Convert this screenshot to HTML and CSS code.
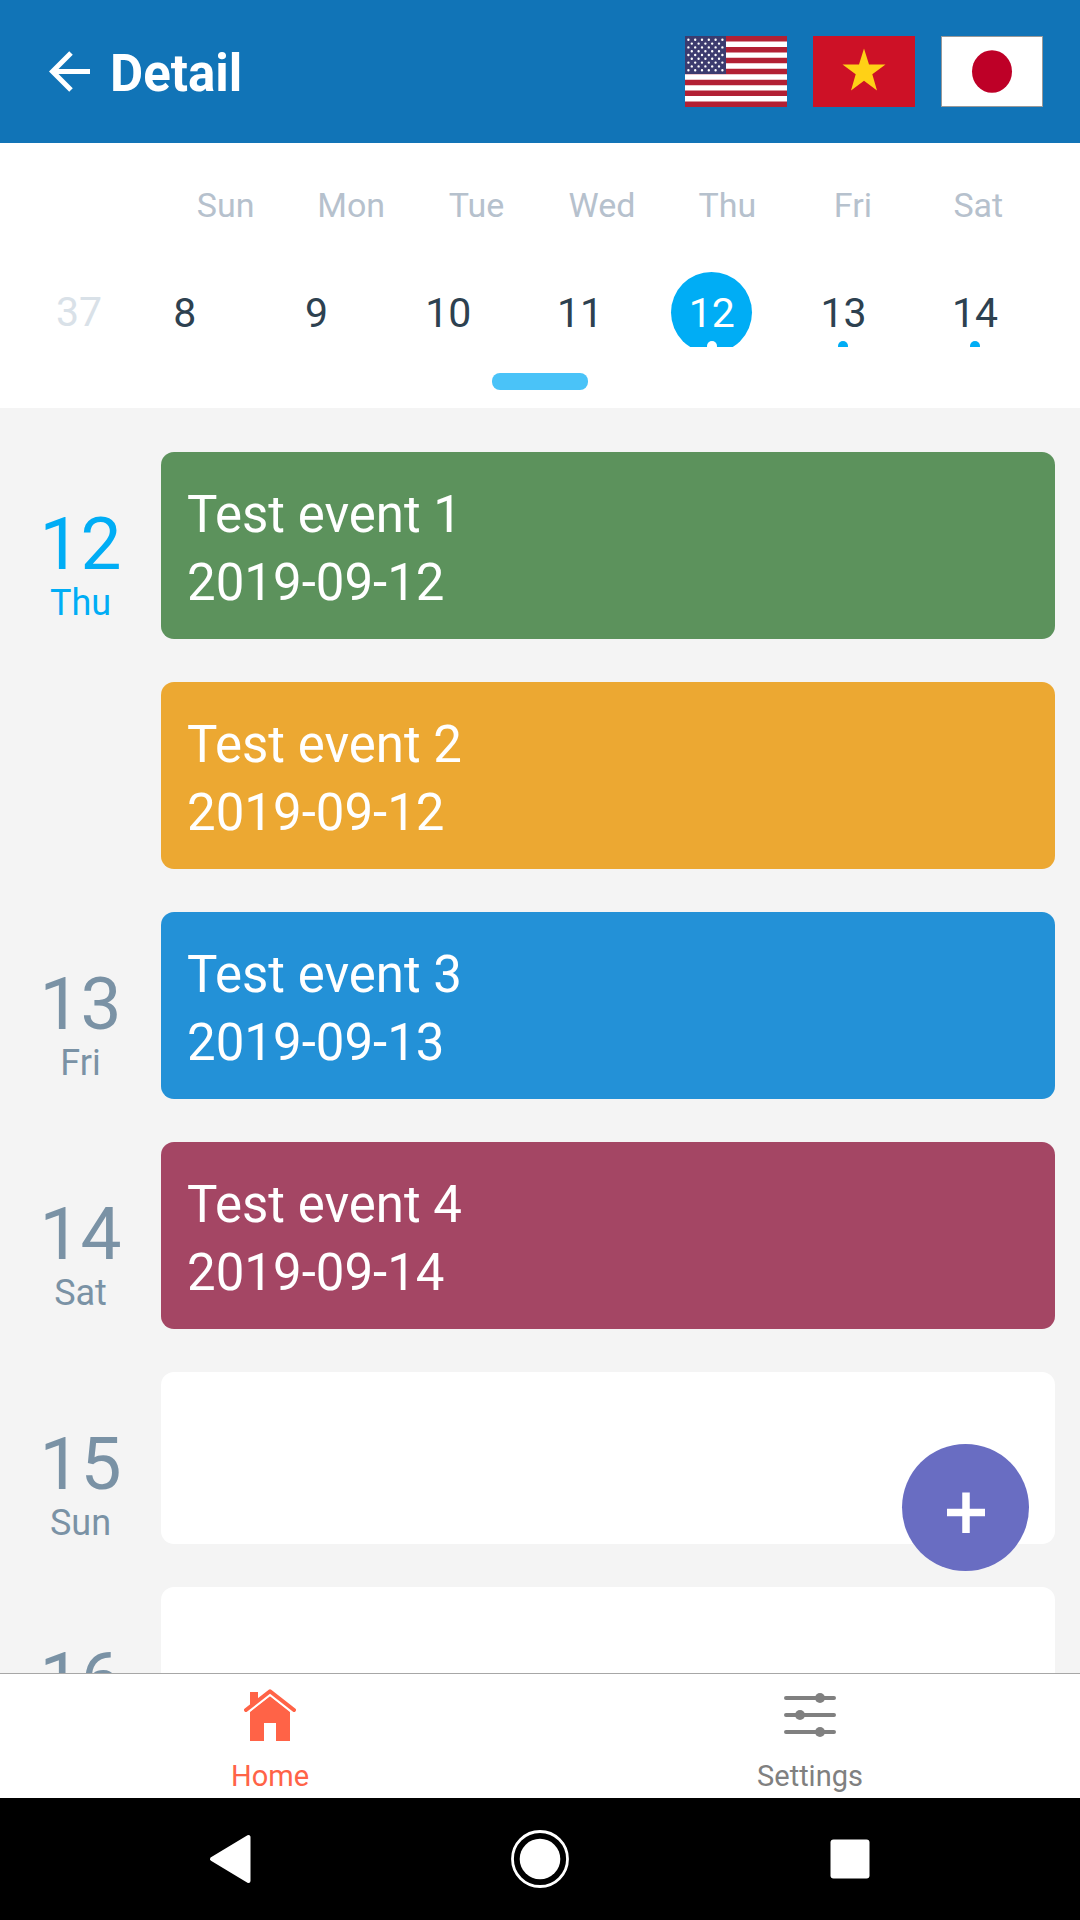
FILE: index.html
```html
<!DOCTYPE html>
<html lang="en">
<head>
<meta charset="utf-8">
<meta name="viewport" content="width=device-width, initial-scale=1">
<title>Detail</title>
<link rel="stylesheet" href="styles.css">
</head>
<body>
<div class="app">
  <header class="header">
    <a class="back" href="#" aria-label="Back">
      <svg class="back-icon" viewBox="0 0 41 41" aria-hidden="true"><path d="M22 2 3.500 20.500 22 39M3.500 20.500H41" fill="none" stroke="#fff" stroke-width="5"/></svg>
    </a>
    <h1 class="title">Detail</h1>
    <div class="languages">
      <button class="flag" type="button" aria-label="English">
        <svg viewBox="0 0 102 71" aria-hidden="true">
          <rect width="102" height="71" fill="#fff"/>
          <path d="M0 2.730H102M0 13.650H102M0 24.580H102M0 35.500H102M0 46.420H102M0 57.350H102M0 68.270H102" stroke="#b22034" stroke-width="5.460"/>
          <rect width="41" height="38" fill="#3c3b6e"/>
          <path d="M3.400 3.800h35M3.400 11.400h35M3.400 19h35M3.400 26.600h35M3.400 34.200h35M6.800 7.600h28M6.800 15.200h28M6.800 22.800h28M6.800 30.400h28" stroke="#fff" stroke-width="2.400" stroke-linecap="round" stroke-dasharray="0 6.800"/>
        </svg>
      </button>
      <button class="flag" type="button" aria-label="Tiếng Việt">
        <svg viewBox="0 0 102 71" aria-hidden="true">
          <rect width="102" height="71" fill="#cd1126"/>
          <path d="M51 12.500 56 28.500H72.500L59.300 38.300 64 54.500 51 44.800 38 54.500 42.700 38.300 29.500 28.500H46Z" fill="#ffd116"/>
        </svg>
      </button>
      <button class="flag" type="button" aria-label="日本語">
        <svg viewBox="0 0 102 71" aria-hidden="true">
          <rect x=".5" y=".5" width="101" height="70" fill="#fff" stroke="#999"/>
          <ellipse cx="51" cy="35.500" rx="20" ry="21.300" fill="#be0027"/>
        </svg>
      </button>
    </div>
  </header>

  <section class="calendar" aria-label="Week 37">
    <div class="weekdays">
      <span>Sun</span><span>Mon</span><span>Tue</span><span>Wed</span><span>Thu</span><span>Fri</span><span>Sat</span>
    </div>
    <div class="dates">
      <span class="week-number">37</span>
      <button class="date" type="button">8</button>
      <button class="date" type="button">9</button>
      <button class="date" type="button">10</button>
      <button class="date" type="button">11</button>
      <button class="date marked selected" type="button" aria-current="date">12</button>
      <button class="date marked" type="button">13</button>
      <button class="date marked" type="button">14</button>
    </div>
    <button class="knob" type="button" aria-label="Expand calendar"></button>
  </section>

  <main class="agenda">
    <div class="rows">
      <div class="row">
        <div class="day today"><span class="day-number">12</span><span class="day-name">Thu</span></div>
        <article class="event green"><p>Test event 1</p><p>2019-09-12</p></article>
      </div>
      <div class="row">
        <div class="day"></div>
        <article class="event orange"><p>Test event 2</p><p>2019-09-12</p></article>
      </div>
      <div class="row">
        <div class="day"><span class="day-number">13</span><span class="day-name">Fri</span></div>
        <article class="event blue"><p>Test event 3</p><p>2019-09-13</p></article>
      </div>
      <div class="row">
        <div class="day"><span class="day-number">14</span><span class="day-name">Sat</span></div>
        <article class="event plum"><p>Test event 4</p><p>2019-09-14</p></article>
      </div>
      <div class="row">
        <div class="day"><span class="day-number">15</span><span class="day-name">Sun</span></div>
        <div class="event empty"></div>
      </div>
      <div class="row">
        <div class="day"><span class="day-number">16</span></div>
        <div class="event empty"></div>
      </div>
    </div>
    <button class="add" type="button" aria-label="Add event">
      <svg viewBox="0 0 127 127" aria-hidden="true"><path d="M45 68.500H83M64 48.500V89" stroke="#fff" stroke-width="7.500"/></svg>
    </button>
  </main>

  <nav class="tabs">
    <a class="tab active" href="#" aria-current="page">
      <svg class="tab-icon" viewBox="0 0 52 52" aria-hidden="true">
        <path d="M6 3h8v7l-8 6.500zM26 7 46 22.500V52H32V34H20V52H6V22.500z" fill="currentColor"/>
        <path d="M2 21 26 2.200 50 21" fill="none" stroke="#fff" stroke-width="8"/>
        <path d="M6 3h8v7l-8 6.500z" fill="currentColor"/>
        <path d="M2 21 26 2.200 50 21" fill="none" stroke="currentColor" stroke-width="4" stroke-linecap="round" stroke-linejoin="round"/>
      </svg>
      Home
    </a>
    <a class="tab" href="#">
      <svg class="tab-icon" viewBox="0 0 52 52" aria-hidden="true">
        <path d="M2 9H50M2 26H50M2 43H50" stroke="currentColor" stroke-width="4" stroke-linecap="round"/>
        <g fill="currentColor"><circle cx="36" cy="9" r="5"/><circle cx="16" cy="26" r="5"/><circle cx="36" cy="43" r="5"/></g>
      </svg>
      Settings
    </a>
  </nav>

  <div class="system-bar">
    <button class="system-button" type="button" aria-label="Back">
      <svg viewBox="0 0 60 60" aria-hidden="true"><path d="M48.500 8v44L12 30z" fill="#fff" stroke="#fff" stroke-width="4" stroke-linejoin="round"/></svg>
    </button>
    <button class="system-button" type="button" aria-label="Home">
      <svg viewBox="0 0 60 60" aria-hidden="true"><circle cx="30" cy="30" r="20.300" fill="#fff"/><circle cx="30" cy="30" r="27.500" fill="none" stroke="#fff" stroke-width="2.800"/></svg>
    </button>
    <button class="system-button" type="button" aria-label="Recent apps">
      <svg viewBox="0 0 60 60" aria-hidden="true"><rect x="10.500" y="10.500" width="39" height="39" rx="3" fill="#fff"/></svg>
    </button>
  </div>
</div>
</body>
</html>
```

FILE: styles.css
```css
* {
  box-sizing: border-box;
}

body,
h1,
p {
  margin: 0;
}

body {
  font-family: Roboto, "Noto Sans", sans-serif;
}

button {
  padding: 0;
  border: 0;
  background: none;
  font: inherit;
  color: inherit;
}

a {
  color: inherit;
  text-decoration: none;
}

svg {
  display: block;
  width: 100%;
}

.app {
  display: flex;
  flex-direction: column;
  height: 100vh;
  background: #fff;
}

/* Header */
.header {
  display: flex;
  align-items: center;
  gap: 20px;
  min-height: 143px;
  padding: 0 37px 0 49px;
  background: #1174b7;
  color: #fff;
}

.back-icon {
  width: 41px;
}

.title {
  flex: 1;
  padding-top: 5px;
  font-size: 51px;
  line-height: 62px;
  font-weight: 700;
}

.languages {
  display: flex;
  gap: 26px;
}

.flag {
  width: 102px;
}

/* Week strip */
.calendar {
  display: flex;
  flex-direction: column;
  padding: 42px 39px 18px;
}

.weekdays {
  display: grid;
  grid-template-columns: repeat(7, 1fr);
  padding-left: 124px;
  font-size: 34px;
  line-height: 40px;
  text-align: center;
  color: #b6c1cd;
}

.dates {
  display: grid;
  grid-template-columns: 80px repeat(7, 1fr);
  justify-items: center;
  height: 75px;
  margin-top: 47px;
  overflow: hidden;
  font-size: 41px;
  line-height: 80px;
  color: #2d4150;
}

.week-number {
  color: #d9e1e8;
}

.date {
  position: relative;
  width: 81px;
  height: 81px;
  border-radius: 50%;
}

.marked::after {
  content: "";
  position: absolute;
  top: 69px;
  left: 50%;
  width: 10px;
  height: 10px;
  margin-left: -5px;
  border-radius: 50%;
  background: #00adf5;
}

.selected {
  background: #00adf5;
  color: #fff;
}

.selected::after {
  background: #fff;
}

.knob {
  align-self: center;
  width: 96px;
  height: 17px;
  margin-top: 26px;
  border-radius: 8px;
  background: #4ac3f8;
}

/* Agenda */
.agenda {
  position: relative;
  flex: 1;
  min-height: 0;
  background: #f4f4f4;
}

.rows {
  display: flex;
  flex-direction: column;
  gap: 43px;
  height: 100%;
  padding: 44px 25px 0 0;
  overflow: hidden;
}

.row {
  display: flex;
  flex-shrink: 0;
}

.day {
  display: flex;
  flex-direction: column;
  align-items: center;
  width: 161px;
  padding-top: 52px;
  color: #7a92a5;
}

.today {
  color: #00adf5;
}

.day-number {
  font-size: 73px;
  line-height: 80px;
}

.day-name {
  font-size: 36px;
  line-height: 38px;
}

.event {
  flex: 1;
  padding: 29px 26px 22px;
  border-radius: 13px;
  font-size: 51px;
  line-height: 68px;
  color: #fff;
}

.green {
  background: #5c925c;
}

.orange {
  background: #eca832;
}

.blue {
  background: #2391d7;
}

.plum {
  background: #a44664;
}

.empty {
  min-height: 172px;
  background: #fff;
}

.add {
  position: absolute;
  right: 51px;
  bottom: 102px;
  width: 127px;
  height: 127px;
  border-radius: 50%;
  background: #696dc2;
}

/* Tab bar */
.tabs {
  display: grid;
  grid-template-columns: 1fr 1fr;
  border-top: 1px solid #a7a7a7;
}

.tab {
  display: flex;
  flex-direction: column;
  align-items: center;
  gap: 18px;
  padding: 15px 0 5px;
  font-size: 29px;
  line-height: 34px;
  color: #808080;
}

.active {
  color: #ff6347;
}

.tab-icon {
  width: 52px;
}

/* System navigation */
.system-bar {
  display: grid;
  grid-template-columns: repeat(3, 1fr);
  justify-items: center;
  padding: 31px 75px;
  background: #000;
}

.system-button {
  width: 60px;
}
```
